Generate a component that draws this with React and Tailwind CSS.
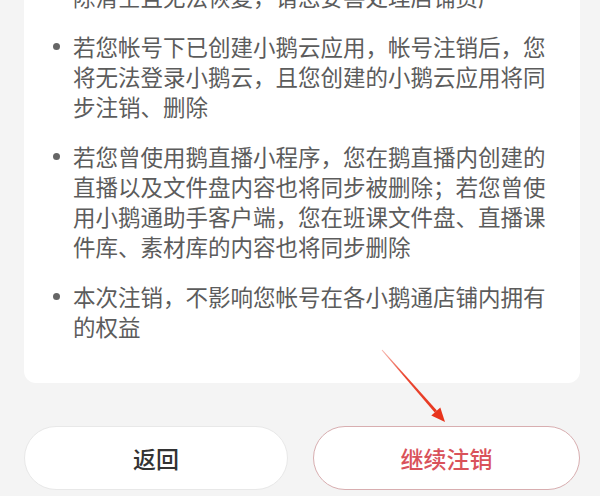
import React from "react";

const font = { fontFamily: '"Noto Sans CJK SC", "Noto Sans", sans-serif' };

function Item({ children, bullet = true }) {
  return (
    <div className="flex items-start">
      <div className="w-[7px] h-[30px] flex items-center shrink-0">
        {bullet && <div className="w-[7px] h-[7px] rounded-full bg-[#666666]" />}
      </div>
      <div className="ml-[13px] flex-1 text-[22.5px] leading-[30px] text-[#5c5c5c]">
        {children}
      </div>
    </div>
  );
}

export default function App() {
  return (
    <div
      className="relative w-[600px] h-[496px] overflow-hidden bg-[#f4f4f4]"
      style={font}
    >
      <div className="pl-[24px] pr-[20px]">
        <div className="-mt-[19px] bg-white rounded-b-[12px] pl-[29px] pr-[24px] pb-[42px] flex flex-col gap-[20px]">
          <Item bullet={false}>除清空且无法恢复，请您妥善处理店铺资产</Item>
          <Item>若您帐号下已创建小鹅云应用，帐号注销后，您将无法登录小鹅云，且您创建的小鹅云应用将同步注销、删除</Item>
          <Item>若您曾使用鹅直播小程序，您在鹅直播内创建的直播以及文件盘内容也将同步被删除；若您曾使用小鹅通助手客户端，您在班课文件盘、直播课件库、素材库的内容也将同步删除</Item>
          <Item>本次注销，不影响您帐号在各小鹅通店铺内拥有的权益</Item>
        </div>
        <div className="mt-[43px] flex gap-[25px]">
          <button className="w-[264px] h-[64px] rounded-full bg-white border border-[#e8e8e8] text-[23px] font-medium text-[#333333] flex items-center justify-center">
            返回
          </button>
          <button className="flex-1 h-[64px] rounded-full bg-white border border-[#d8aeb0] text-[23px] font-medium text-[#d9525a] flex items-center justify-center">
            继续注销
          </button>
        </div>
      </div>
      <svg
        className="absolute inset-0 pointer-events-none"
        width="600"
        height="496"
        viewBox="0 0 600 496"
      >
        <defs>
          <linearGradient id="ag" x1="382" y1="350" x2="445" y2="422" gradientUnits="userSpaceOnUse">
            <stop offset="0" stopColor="#e8341c" stopOpacity="0.35" />
            <stop offset="0.35" stopColor="#e8341c" stopOpacity="0.9" />
            <stop offset="1" stopColor="#e8341c" />
          </linearGradient>
        </defs>
        <polygon
          points="381.6,350.3 382.4,349.7 436.9,410.5 434.7,412.5"
          fill="url(#ag)"
        />
        <polygon points="445,422 431.3,415.5 440.3,407.5" fill="#e8341c" />
      </svg>
    </div>
  );
}
